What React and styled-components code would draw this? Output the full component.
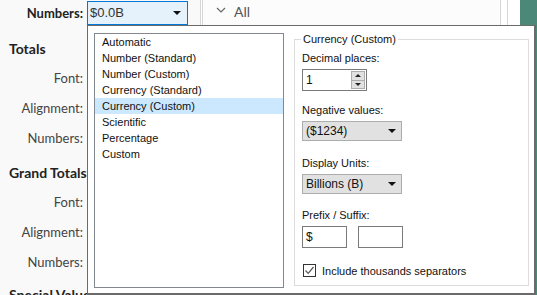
import React from 'react'
import styled, {createGlobalStyle} from 'styled-components'

const GlobalStyle = createGlobalStyle`
  html, body { margin:0; padding:0; background:#fff; }
  body { width:537px; height:295px; overflow:hidden; }
`

const ui = `"Liberation Sans", Arial, sans-serif`
const lato = `Lato, "Liberation Sans", sans-serif`

const Page = styled.div`
position:relative;
width:537px;
height:295px;
overflow:hidden;
display:flex;
background:#fff;
`
const LeftPanel = styled.div`
width:200px;
flex:none;
background:#f9f9f9;
display:flex;
flex-direction:column;
font-family:${lato};
color:#333;
`
const Divider = styled.div`
width:1px;
flex:none;
background:#d6d6d6;
margin-left:${p => p.gap || 0}px;
`
const MiddlePanel = styled.div`
flex:1;
background:#fcfcfc;
padding:3px 0 0 13px;
font-family:${lato};
font-size:14px;
color:#555;
display:flex;
align-items:flex-start;
gap:8px;
`
const WhiteStrip = styled.div`
width:12px;
flex:none;
background:#fff;
`
const GreenStrip = styled.div`
width:17px;
flex:none;
background:#4b8878;
`
const Row = styled.div`
height:${p => p.h || 30}px;
display:flex;
align-items:center;
flex:none;
`
const Label = styled.div`
width:83px;
flex:none;
text-align:right;
font-size:13px;
font-weight:${p => p.bold ? 700 : 400};
color:${p => p.bold ? '#222' : '#444'};
margin-right:4px;
`
const Heading = styled.div`
font-size:14px;
font-weight:700;
color:#222;
padding-left:9px;
height:16px;
line-height:16px;
margin-top:${p => p.mt}px;
margin-bottom:${p => p.mb || 0}px;
white-space:nowrap;
`
const TopSelect = styled.div`
height:24px;
margin-top:-1px;
border:1px solid #0078d7;
background:#e5f1fb;
display:flex;
align-items:center;
justify-content:space-between;
padding:0 6px 0 2px;
box-sizing:border-box;
width:101px;
font-family:${ui};
font-size:13px;
color:#333;
`
const Arrow = styled.span`
width:0;
height:0;
border-left:4px solid transparent;
border-right:4px solid transparent;
border-top:4px solid #111;
`
const Popup = styled.div`
position:absolute;
left:87px;
top:25px;
width:449px;
height:270px;
box-sizing:border-box;
background:#fff;
border:1px solid #6b6b6b;
border-right-width:2px;
border-bottom-width:2px;
padding:7px 5px 6px 6px;
display:flex;
gap:10px;
font-family:${ui};
font-size:11px;
color:#111;
`
const ListBox = styled.div`
width:190px;
height:255px;
box-sizing:border-box;
border:1px solid #828790;
padding:0;
flex:none;
`
const ListItem = styled.div`
height:16px;
line-height:16px;
padding-left:7px;
background:${p => p.selected ? '#cce8ff' : 'transparent'};
`
const Group = styled.fieldset`
margin:0;
margin-top:-1px;
flex:1;
height:254px;
box-sizing:border-box;
border:1px solid #dcdcdc;
padding:0 0 0 7px;
display:flex;
flex-direction:column;
align-items:flex-start;
`
const Legend = styled.legend`
padding:0 2px;
margin-left:-1px;
line-height:14px;
`
const FieldLabel = styled.div`
height:16px;
line-height:16px;
margin-top:${p => p.mt}px;
margin-bottom:3px;
`
const SpinBox = styled.div`
width:65px;
height:22px;
box-sizing:border-box;
border:1px solid #7a7a7a;
display:flex;
align-items:center;
padding:1px 1px 1px 3px;
gap:1px;
`
const SpinValue = styled.div`
flex:1;
font-size:12px;
`
const SpinButtons = styled.div`
width:14px;
height:18px;
display:flex;
flex-direction:column;
`
const SpinButton = styled.div`
flex:1;
background:#e1e1e1;
border:1px solid #adadad;
display:flex;
align-items:center;
justify-content:center;
&:first-child { border-bottom:none; }
`
const Tri = styled.span`
width:0;
height:0;
border-left:3px solid transparent;
border-right:3px solid transparent;
${p => p.up ? 'border-bottom:3px solid #222;' : 'border-top:3px solid #222;'}
`
const Select = styled.div`
width:100px;
height:20px;
box-sizing:border-box;
background:#e1e1e1;
border:1px solid #adadad;
display:flex;
align-items:center;
justify-content:space-between;
padding:0 5px 0 3px;
font-size:12px;
`
const Inputs = styled.div`
display:flex;
gap:11px;
`
const TextBox = styled.div`
width:45px;
height:22px;
box-sizing:border-box;
border:1px solid #7a7a7a;
padding:0 3px;
line-height:20px;
font-size:12px;
`
const CheckRow = styled.div`
display:flex;
align-items:center;
gap:6px;
margin-top:16px;
margin-left:1px;
`
const CheckBox = styled.div`
width:13px;
height:13px;
box-sizing:border-box;
border:1px solid #333;
display:flex;
align-items:center;
justify-content:center;
`

const formats = ['Automatic', 'Number (Standard)', 'Number (Custom)', 'Currency (Standard)', 'Currency (Custom)', 'Scientific', 'Percentage', 'Custom']

function Section({title, mt, mb}) {
  return (
    <>
      <Heading mt={mt} mb={mb}>{title}</Heading>
      <Row><Label>Font:</Label></Row>
      <Row><Label>Alignment:</Label></Row>
      <Row><Label>Numbers:</Label></Row>
    </>
  )
}

export default function App() {
  return (
    <Page>
      <GlobalStyle />
      <LeftPanel>
        <Row h={26}>
          <Label bold>Numbers:</Label>
          <TopSelect>$0.0B<Arrow /></TopSelect>
        </Row>
        <Section title="Totals" mt={15} mb={6} />
        <Section title="Grand Totals" mt={12} mb={6} />
        <Heading mt={10}>Special Values (NULL)</Heading>
      </LeftPanel>
      <Divider />
      <Divider gap={1} />
      <MiddlePanel>
        <svg width="10" height="14" viewBox="0 0 10 14">
          <path d="M1 5 L5 9 L9 5" fill="none" stroke="#666" strokeWidth="1.2" />
        </svg>
        <span>All</span>
      </MiddlePanel>
      <Divider />
      <Divider gap={6} />
      <WhiteStrip />
      <GreenStrip />

      <Popup>
        <ListBox>
          {formats.map(f => (
            <ListItem key={f} selected={f === 'Currency (Custom)'}>{f}</ListItem>
          ))}
        </ListBox>
        <Group>
          <Legend>Currency (Custom)</Legend>
          <FieldLabel mt={4}>Decimal places:</FieldLabel>
          <SpinBox>
            <SpinValue>1</SpinValue>
            <SpinButtons>
              <SpinButton><Tri up /></SpinButton>
              <SpinButton><Tri /></SpinButton>
            </SpinButtons>
          </SpinBox>
          <FieldLabel mt={11}>Negative values:</FieldLabel>
          <Select>($1234)<Arrow /></Select>
          <FieldLabel mt={14}>Display Units:</FieldLabel>
          <Select>Billions (B)<Arrow /></Select>
          <FieldLabel mt={13}>Prefix / Suffix:</FieldLabel>
          <Inputs>
            <TextBox>$</TextBox>
            <TextBox />
          </Inputs>
          <CheckRow>
            <CheckBox>
              <svg width="11" height="11" viewBox="0 0 11 11">
                <path d="M1.5 5.5 L4.2 8.3 L9.5 2" fill="none" stroke="#555" strokeWidth="1.2" />
              </svg>
            </CheckBox>
            <span>Include thousands separators</span>
          </CheckRow>
        </Group>
      </Popup>
    </Page>
  )
}
